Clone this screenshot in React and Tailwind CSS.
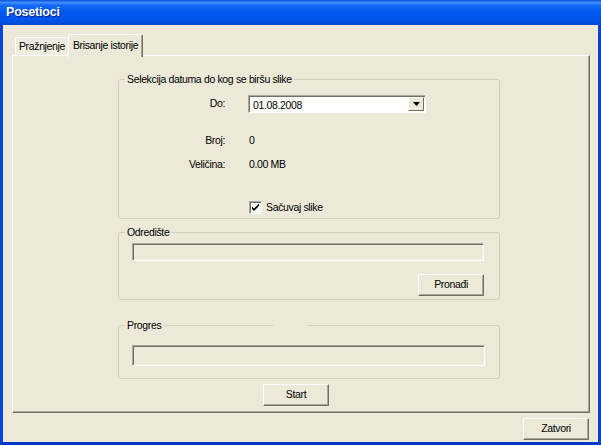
import React from "react";

const face = "bg-[#ECE9D8]";

function Btn({ children, className = "" }) {
  return (
    <div
      className={`flex items-center justify-center w-[66px] h-[22px] border border-t-white border-l-white border-b-[#716F64] border-r-[#716F64] shadow-[inset_-1px_-1px_0_#ACA899] ${face} ${className}`}
    >
      {children}
    </div>
  );
}

function Sunken({ className = "", children }) {
  return (
    <div
      className={`border border-t-[#ACA899] border-l-[#ACA899] border-b-white border-r-white shadow-[inset_1px_1px_0_#716F64,inset_-1px_-1px_0_#F1EFE2] ${className}`}
    >
      {children}
    </div>
  );
}

function Group({ label, className = "", children }) {
  return (
    <div className={`relative w-[382px] border border-[#D0D0BF] rounded-[3px] ${className}`}>
      <span className={`absolute left-[6px] -top-[8px] px-[2px] leading-[14px] ${face}`}>{label}</span>
      {children}
    </div>
  );
}

export default function App() {
  return (
    <div
      className={`w-[601px] h-[445px] flex flex-col ${face} text-[10.5px] tracking-[-0.35px] text-black whitespace-nowrap`}
      style={{ fontFamily: '"Liberation Sans", Arial, sans-serif' }}
    >
      {/* title bar */}
      <div className="h-[25px] shrink-0 flex items-center pl-[6px] bg-[linear-gradient(to_bottom,#0A4FD8_0%,#3F8CFF_10%,#1369F5_22%,#0058EE_50%,#0055EA_80%,#0048D0_100%)]">
        <span className="text-white font-bold text-[12.5px] tracking-[-0.2px] [text-shadow:1px_1px_0_#0A1E8C]">
          Posetioci
        </span>
      </div>

      {/* body */}
      <div className="flex-1 flex flex-col border-l-[3px] border-r-[3px] border-b-[3px] border-l-[#0843D8] border-r-[#0843D8] border-b-[#0638C8]">
        <div className="pl-[9px] pt-[9px]">
          {/* tabs */}
          <div className="flex items-end h-[21px] pl-[3px]">
            <div className="h-[18px] w-[53px] flex items-center justify-center border-l border-t border-white rounded-tl-[2px] bg-[#EFEDE0]">
              Pražnjenje
            </div>
            <div className={`relative z-10 -mb-[2px] h-[23px] w-[75px] flex items-start justify-center pt-[3px] border-l border-t border-white border-r border-r-[#716F64] shadow-[inset_-1px_0_0_#ACA899] rounded-t-[2px] ${face}`}>
              Brisanje istorije
            </div>
          </div>

          {/* panel */}
          <div className="w-[578px] h-[358px] border border-t-white border-l-white border-b-[#716F64] border-r-[#716F64] shadow-[inset_-1px_-1px_0_#ACA899] flex flex-col items-start pl-[105px] pt-[23px]">
            {/* group 1 */}
            <Group label="Selekcija datuma do kog se biršu slike" className="h-[140px]">
              <div className="flex items-center mt-[15px]">
                <span className="w-[106px] text-right">Do:</span>
                <div className="ml-[23px] w-[178px] h-[18px] flex items-stretch border border-t-[#ACA899] border-l-[#ACA899] border-b-white border-r-white shadow-[inset_1px_1px_0_#716F64] bg-white">
                  <span className="flex-1 pl-[4px] pt-[2px] leading-[14px]">01.08.2008</span>
                  <div className="w-[16px] my-[1px] mr-[1px] flex items-center justify-center border border-t-white border-l-white border-b-[#716F64] border-r-[#716F64] bg-[#ECE9D8]">
                    <svg width="7" height="4" viewBox="0 0 7 4">
                      <path d="M0 0h7L3.5 4z" fill="#000" />
                    </svg>
                  </div>
                </div>
              </div>
              <div className="flex items-center mt-[20px] leading-[14px]">
                <span className="w-[106px] text-right">Broj:</span>
                <span className="ml-[24px]">0</span>
              </div>
              <div className="flex items-center mt-[10px] leading-[14px]">
                <span className="w-[106px] text-right">Veličina:</span>
                <span className="ml-[24px]">0.00 MB</span>
              </div>
              <div className="flex items-center mt-[29px] ml-[130px]">
                <div className="w-[13px] h-[13px] bg-white border border-t-[#ACA899] border-l-[#ACA899] border-b-white border-r-white shadow-[inset_1px_1px_0_#716F64,inset_-1px_-1px_0_#F1EFE2] flex items-center justify-center">
                  <svg width="9" height="9" viewBox="0 0 9 9">
                    <path d="M1 3.5l2 2 5-5v2.5L3 8 1 6z" fill="#000" />
                  </svg>
                </div>
                <span className="ml-[4px]">Sačuvaj slike</span>
              </div>
            </Group>

            {/* group 2 */}
            <Group label="Odredište" className="h-[68px] mt-[13px]">
              <Sunken className="ml-[13px] mt-[10px] w-[352px] h-[18px]" />
              <div className="flex justify-end pr-[15px] mt-[13px]">
                <Btn>Pronađi</Btn>
              </div>
            </Group>

            {/* group 3 */}
            <Group label="Progres" className="h-[54px] mt-[25px]">
              <span className={`absolute left-[154px] -top-[2px] w-[35px] h-[3px] ${face}`} />
              <Sunken className="ml-[13px] mt-[19px] w-[353px] h-[21px]" />
            </Group>

            <div className="flex mt-[5px] pl-[145px]">
              <Btn>Start</Btn>
            </div>
          </div>
        </div>

        <div className="flex justify-end pr-[9px] mt-[5px]">
          <Btn>Zatvori</Btn>
        </div>
      </div>
    </div>
  );
}
